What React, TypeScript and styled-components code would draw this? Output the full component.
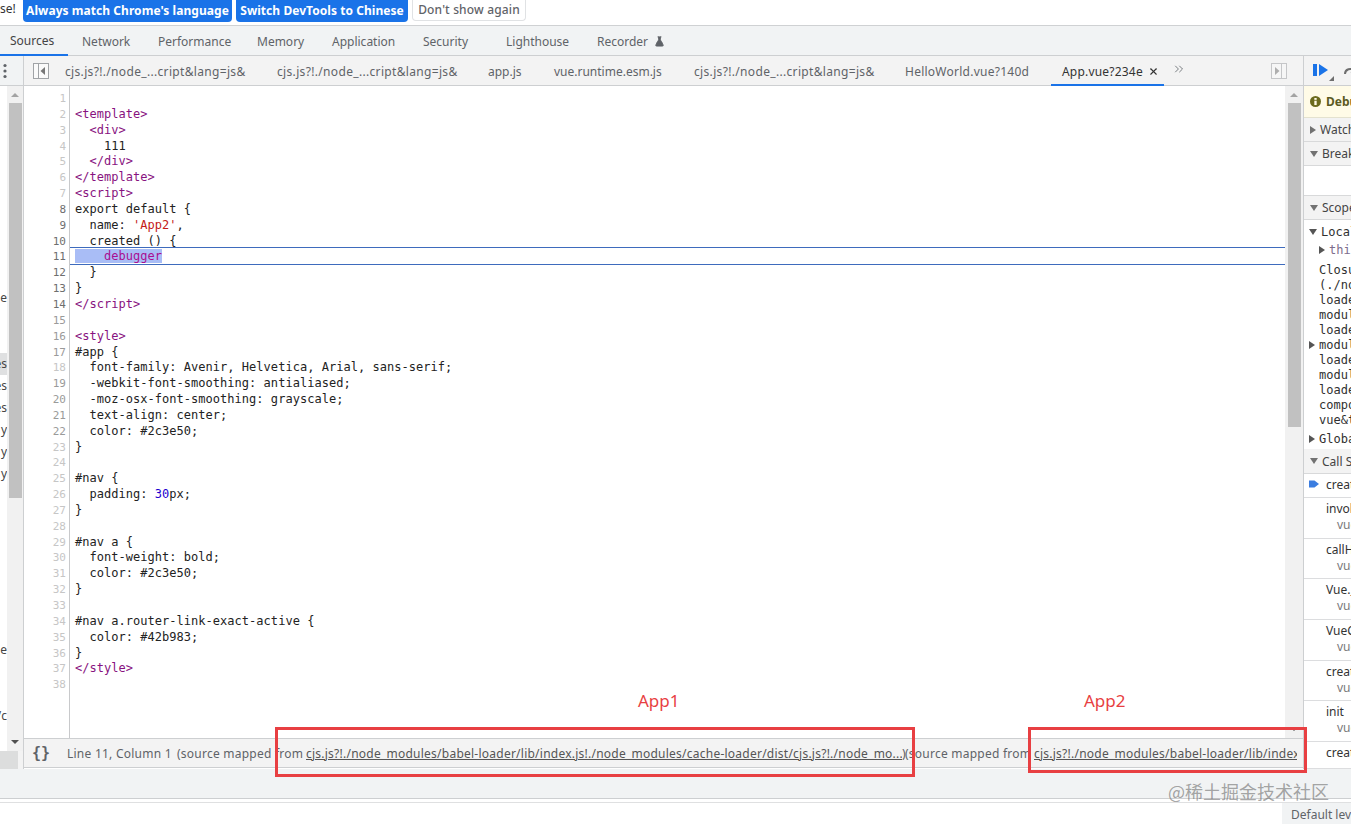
import React from "react";
import styled, { createGlobalStyle } from "styled-components";
import { X, ChevronsRight, FlaskConical } from "lucide-react";

const GlobalStyle = createGlobalStyle`
  html, body { margin: 0; padding: 0; height: 824px; overflow: hidden; background: #fff; }
  * { box-sizing: border-box; }
  svg { flex: none; }
  body { font-family: "Noto Sans", "Open Sans", sans-serif; font-size: 12px; color: #444; }
`;

const Page = styled.div`
  position: relative;
  width: 1351px;
  height: 824px;
  overflow: hidden;
  display: flex;
  flex-direction: column;
`;

/* top info bar */
const InfoBar = styled.div`
  height: 26px;
  display: flex;
  align-items: flex-start;
  border-bottom: 1px solid #cfd1d3;
  background: #fff;
`;
const InfoText = styled.span`
  width: 23px;
  line-height: 18px;
  color: #333;
  font-size: 12px;
`;
const InfoButton = styled.button<{ $plain?: boolean; $w: number }>`
  height: ${(p) => (p.$plain ? "21px" : "22px")};
  padding: 0 0 2px;
  margin-right: 4px;
  border: ${(p) => (p.$plain ? "1px solid #e0e2e4" : "none")};
  border-top: none;
  border-radius: 0 0 4px 4px;
  background: ${(p) => (p.$plain ? "#fff" : "#1a73e8")};
  color: ${(p) => (p.$plain ? "#5f6368" : "#fff")};
  font-family: inherit;
  font-size: 12px;
  font-weight: ${(p) => (p.$plain ? 500 : 700)};
  letter-spacing: ${(p) => (p.$plain ? "0.15px" : "0.05px")};
  line-height: 19px;
  width: ${(p) => p.$w}px;
`;

/* main devtools tabs */
const MainTabs = styled.div`
  height: 30px;
  display: flex;
  background: #f1f3f4;
  border-bottom: 1px solid #cdcfd1;
`;
const MainTab = styled.div<{ $active?: boolean; $w: number }>`
  width: ${(p) => p.$w}px;
  height: 30px;
  margin-right: ${(p) => (p.$active ? "4px" : "0")};
  padding: 0 0 0 10px;
  display: flex;
  align-items: center;
  gap: 6px;
  color: ${(p) => (p.$active ? "#444" : "#5f6368")};
  border-bottom: ${(p) => (p.$active ? "2px solid #1a73e8" : "none")};
  white-space: nowrap;
`;

const Body = styled.div`
  height: 713px;
  display: flex;
`;

/* clipped navigator on the left */
const Navigator = styled.div`
  width: 24px;
  flex: none;
  display: flex;
  flex-direction: column;
  border-right: 1px solid #cdcfd1;
`;
const NavHeader = styled.div`
  height: 30px;
  flex: none;
  display: flex;
  align-items: center;
  padding-left: 3px;
  background: #f1f3f4;
  border-bottom: 1px solid #cdcfd1;
`;
const NavContent = styled.div`
  flex: 1;
  display: flex;
  min-height: 0;
`;
const NavFooter = styled.div`
  height: 18px;
  flex: none;
  background: linear-gradient(to right, #dcdddd 18px, #f3f3f3 18px);
`;
const NavList = styled.div`
  width: 7px;
  flex: none;
  padding-top: 3px;
  overflow: hidden;
`;
const NavRow = styled.div<{ $selected?: boolean }>`
  height: 22px;
  line-height: 22px;
  font-size: 12px;
  display: flex;
  justify-content: flex-end;
  background: ${(p) => (p.$selected ? "#dfe0e1" : "transparent")};
  color: #444;
`;
const Scrollbar = styled.div<{ $w: number }>`
  width: ${(p) => p.$w}px;
  flex: none;
  background: #f1f1f1;
  display: flex;
  flex-direction: column;
  align-items: center;
  height: 100%;
`;
const ArrowUp = styled.div`
  margin-top: 7px;
  width: 0;
  height: 0;
  border-left: 4px solid transparent;
  border-right: 4px solid transparent;
  border-bottom: 4px solid #a3a3a3;
`;
const ArrowDown = styled.div`
  margin-top: auto;
  margin-bottom: 7px;
  width: 0;
  height: 0;
  border-left: 4px solid transparent;
  border-right: 4px solid transparent;
  border-top: 4px solid #505050;
`;
const Thumb = styled.div<{ $h: number; $w: number }>`
  width: ${(p) => p.$w}px;
  height: ${(p) => p.$h}px;
  margin-top: 6px;
  background: #c1c1c1;
`;

/* editor */
const EditorColumn = styled.div`
  width: 1279px;
  flex: none;
  display: flex;
  flex-direction: column;
`;
const FileTabs = styled.div`
  height: 30px;
  flex: none;
  display: flex;
  align-items: stretch;
  padding-left: 9px;
  background: #f3f3f3;
  border-bottom: 1px solid #cdcfd1;
`;
const PanelToggle = styled.div<{ $right?: boolean }>`
  width: 32px;
  display: flex;
  align-items: center;
  margin-left: ${(p) => (p.$right ? "auto" : "0")};
`;
const FileTab = styled.div<{ $active?: boolean; $w: number; $track?: number }>`
  width: ${(p) => p.$w}px;
  height: 30px;
  display: flex;
  align-items: center;
  padding-top: ${(p) => (p.$active ? "2px" : "0")};
  white-space: nowrap;
  letter-spacing: ${(p) => p.$track ?? 0}px;
  color: ${(p) => (p.$active ? "#333" : "#5f6368")};
  border-bottom: ${(p) => (p.$active ? "2px solid #1a73e8" : "none")};
`;
const ActiveTab = styled(FileTab)`
  padding-left: 11px;
  gap: 5px;
  color: #333;
`;
const MoreTabs = styled.div`
  margin-left: 8px;
  display: flex;
  align-items: center;
  padding-bottom: 4px;
  color: #5f6368;
`;
const EditorBody = styled.div`
  height: 652px;
  flex: none;
  display: flex;
`;
const Gutter = styled.div`
  width: 46px;
  flex: none;
  padding: 5px 3px 0 0;
  border-right: 1px solid #c8c9cb;
  text-align: right;
  font-family: "DejaVu Sans Mono", "Liberation Mono", monospace;
  font-size: 11px;
  line-height: 15.85px;
`;
const LineNumber = styled.div<{ $tone: "dark" | "mid" | "light" }>`
  height: 15.85px;
  color: ${(p) => (p.$tone === "dark" ? "#6e6e6e" : p.$tone === "mid" ? "#9a9a9a" : "#c6c6c6")};
`;
const CodeColumn = styled.div`
  flex: 1;
  padding: 5px 0 0 0;
  font-family: "DejaVu Sans Mono", "Liberation Mono", monospace;
  font-size: 12px;
  line-height: 15.85px;
  color: #222;
  min-width: 0;
`;
const CodeLine = styled.div<{ $current?: boolean }>`
  height: 15.85px;
  padding-left: 5px;
  white-space: pre;
  letter-spacing: 0.03px;
  ${(p) =>
    p.$current
      ? "margin: -1px 0 1px; padding-top: 1px; box-shadow: 0 -1px 0 #3e6bbd, 0 1px 0 #3e6bbd;"
      : ""}
`;
const tokenColors = { tag: "#881280", str: "#c41a16", num: "#1c00cf", kw: "#aa0d91", plain: "#222" };
const Token = styled.span<{ $kind: keyof typeof tokenColors; $hit?: boolean }>`
  color: ${(p) => tokenColors[p.$kind]};
  background: ${(p) => (p.$hit ? "#a9bdf6" : "transparent")};
`;

/* status row under the editor */
const StatusBar = styled.div`
  height: 30px;
  flex: none;
  display: flex;
  align-items: center;
  background: #f3f3f3;
  border-top: 1px solid #cdcfd1;
  border-bottom: 1px solid #cdcfd1;
  color: #5f6368;
  letter-spacing: 0.24px;
  white-space: nowrap;
  overflow: hidden;
`;
const Braces = styled.span`
  width: 43px;
  padding-left: 8px;
  font-family: "DejaVu Sans Mono", monospace;
  font-size: 15px;
  font-weight: 700;
  letter-spacing: 0;
  color: #5f6368;
`;
const StatusPosition = styled.span`
  width: 110px;
`;
const SourceLink = styled.span<{ $w: number }>`
  display: inline-block;
  width: ${(p) => p.$w}px;
  overflow: hidden;
  text-decoration: underline;
  color: #555;
  flex: none;
`;
const MappedFrom = styled.span<{ $w: number }>`
  width: ${(p) => p.$w}px;
  flex: none;
`;

/* debugger sidebar, clipped by the window */
const DebugPane = styled.div`
  width: 48px;
  flex: none;
  display: flex;
  flex-direction: column;
  border-left: 1px solid #cdcfd1;
  white-space: nowrap;
  overflow: hidden;
  color: #333;
`;
const DebugToolbar = styled.div`
  height: 30px;
  flex: none;
  display: flex;
  padding: 0 0 0 9px;
  gap: 8px;
  align-items: center;
  background: #f3f3f3;
  border-bottom: 1px solid #cdcfd1;
`;
const Paused = styled.div`
  height: 32px;
  flex: none;
  display: flex;
  align-items: center;
  gap: 5px;
  padding-left: 6px;
  background: #fffbe7;
  border-bottom: 1px solid #e4e2cf;
  color: #5c5a22;
  font-weight: 700;
`;
const SectionHeader = styled.div<{ $h?: number }>`
  height: ${(p) => p.$h ?? 24}px;
  flex: none;
  display: flex;
  align-items: center;
  gap: 4px;
  padding-left: 6px;
  background: #f3f3f3;
  border-bottom: 1px solid #d8d9da;
  color: #444;
`;
const Caret = styled.span<{ $open?: boolean; $dark?: boolean }>`
  width: 0;
  height: 0;
  flex: none;
  ${(p) =>
    p.$open
      ? `border-left: 4px solid transparent; border-right: 4px solid transparent; border-top: 6px solid ${p.$dark ? "#555" : "#727272"};`
      : `border-top: 4px solid transparent; border-bottom: 4px solid transparent; border-left: 6px solid ${p.$dark ? "#555" : "#727272"};`}
`;
const BlankSection = styled.div`
  height: 30px;
  flex: none;
  border-bottom: 1px solid #d8d9da;
`;
const ScopeList = styled.div`
  height: 229px;
  flex: none;
  padding-top: 3px;
  font-family: "DejaVu Sans Mono", monospace;
  font-size: 12px;
  color: #303030;
`;
const ScopeRow = styled.div<{ $indent: number; $h?: number; $muted?: boolean; $after?: number }>`
  height: ${(p) => p.$h ?? 15}px;
  margin-bottom: ${(p) => p.$after ?? 0}px;
  display: flex;
  align-items: center;
  gap: 4px;
  padding-left: ${(p) => p.$indent}px;
  color: ${(p) => (p.$muted ? "#7d6d8c" : "inherit")};
`;
const FrameRow = styled.div<{ $h: number }>`
  height: ${(p) => p.$h}px;
  flex: none;
  padding: 3px 0 0 22px;
  border-bottom: 1px solid #dcdddf;
  line-height: 16px;
  color: #333;
  position: relative;
`;
const FrameSource = styled.div`
  padding-left: 11px;
  color: #7a7a7a;
`;
const CurrentMarker = styled.svg`
  position: absolute;
  left: 5px;
  top: 5px;
`;

/* bottom strips */
const Drawer = styled.div`
  height: 30px;
  flex: none;
  background: #f1f3f4;
  border-bottom: 1px solid #cdcfd1;
`;
const ConsoleBar = styled.div`
  flex: 1;
  margin-top: 3px;
  display: flex;
  justify-content: flex-end;
  border-top: 1px solid #dfe0e1;
`;
const LevelBox = styled.div`
  width: 69px;
  padding: 3px 0 0 9px;
  background: #f1f3f4;
  color: #5f6368;
  white-space: nowrap;
  overflow: hidden;
`;

/* annotations painted on top of the screenshot */
const RedBox = styled.div<{ $l: number; $t: number; $w: number; $h: number }>`
  position: absolute;
  left: ${(p) => p.$l}px;
  top: ${(p) => p.$t}px;
  width: ${(p) => p.$w}px;
  height: ${(p) => p.$h}px;
  border: 3px solid #e83f42;
  pointer-events: none;
`;
const RedLabel = styled.div<{ $l: number; $t: number }>`
  position: absolute;
  left: ${(p) => p.$l}px;
  top: ${(p) => p.$t}px;
  color: #e83f42;
  font-size: 17px;
  line-height: 22px;
`;
const Watermark = styled.div`
  position: absolute;
  left: 1168px;
  top: 778px;
  font-family: "Noto Sans CJK SC", "Noto Sans", sans-serif;
  font-size: 18px;
  line-height: 26px;
  color: rgba(110, 110, 110, 0.62);
  white-space: nowrap;
`;

const mainTabs: [string, number][] = [
  ["Sources", 68],
  ["Network", 76],
  ["Performance", 99],
  ["Memory", 75],
  ["Application", 91],
  ["Security", 83],
  ["Lighthouse", 91],
];
const fileTabs: [string, number, number][] = [
  ["cjs.js?!./node_...cript&lang=js&", 212, 0.33],
  ["cjs.js?!./node_...cript&lang=js&", 211, 0.33],
  ["app.js", 66, 0],
  ["vue.runtime.esm.js", 140, 0],
  ["cjs.js?!./node_...cript&lang=js&", 211, 0.33],
  ["HelloWorld.vue?140d", 146, 0.25],
];

const navRows: Record<number, string> = { 9: "e", 12: "es", 13: "es", 14: "es", 15: "y", 16: "y", 17: "y", 25: "e", 28: "/c" };

type Kind = keyof typeof tokenColors;
type Part = [string, Kind];
const code: Part[][] = [
  [],
  [["<template>", "tag"]],
  [["  <div>", "tag"]],
  [["    111", "plain"]],
  [["  </div>", "tag"]],
  [["</template>", "tag"]],
  [["<script>", "tag"]],
  [["export default {", "plain"]],
  [["  name: ", "plain"], ["'App2'", "str"], [",", "plain"]],
  [["  created () {", "plain"]],
  [["    debugger", "kw"]],
  [["  }", "plain"]],
  [["}", "plain"]],
  [["</script>", "tag"]],
  [],
  [["<style>", "tag"]],
  [["#app {", "plain"]],
  [["  font-family: Avenir, Helvetica, Arial, sans-serif;", "plain"]],
  [["  -webkit-font-smoothing: antialiased;", "plain"]],
  [["  -moz-osx-font-smoothing: grayscale;", "plain"]],
  [["  text-align: center;", "plain"]],
  [["  color: #2c3e50;", "plain"]],
  [["}", "plain"]],
  [],
  [["#nav {", "plain"]],
  [["  padding: ", "plain"], ["30", "num"], ["px;", "plain"]],
  [["}", "plain"]],
  [],
  [["#nav a {", "plain"]],
  [["  font-weight: bold;", "plain"]],
  [["  color: #2c3e50;", "plain"]],
  [["}", "plain"]],
  [],
  [["#nav a.router-link-exact-active {", "plain"]],
  [["  color: #42b983;", "plain"]],
  [["}", "plain"]],
  [["</style>", "tag"]],
  [],
];

const toneOf = (n: number): "dark" | "mid" | "light" => {
  if (n >= 8 && n <= 14) return "dark";
  if ((n >= 15 && n <= 17) || (n >= 19 && n <= 22)) return "mid";
  return "light";
};

const scopeRows = ["Closure", "(./node_modules", "loader", "module", "loader"];
const scopeRows2 = ["loader", "module", "loader", "component", "vue&type"];
const frames: [string, number][] = [
  ["invokeWithErrorHandling", 41],
  ["callHook", 40],
  ["Vue._init", 41],
  ["VueComponent", 41],
  ["createComponentInstance", 40],
  ["init", 41],
];

const PanelIcon = ({ flip }: { flip?: boolean }) => (
  <svg width="16" height="16" viewBox="0 0 16 16" fill="none" style={flip ? { transform: "scaleX(-1)", opacity: 0.55 } : undefined}>
    <rect x="0.5" y="0.5" width="15" height="15" fill="#fafafa" stroke="#a0a3a6" />
    <line x1="5.5" y1="1" x2="5.5" y2="15" stroke="#a0a3a6" />
    <path d="M12 4v8L7.500 8z" fill="#777" />
  </svg>
);

export default function App() {
  return (
    <Page>
      <GlobalStyle />
      <InfoBar>
        <InfoText>se!</InfoText>
        <InfoButton $w={209}>Always match Chrome's language</InfoButton>
        <InfoButton $w={172}>Switch DevTools to Chinese</InfoButton>
        <InfoButton $plain $w={114}>Don't show again</InfoButton>
      </InfoBar>
      <MainTabs>
        {mainTabs.map(([name, w], i) => (
          <MainTab key={name} $w={w} $active={i === 0}>{name}</MainTab>
        ))}
        <MainTab $w={90}>
          Recorder
          <FlaskConical size={11} fill="#5f6368" color="#5f6368" />
        </MainTab>
      </MainTabs>
      <Body>
        <Navigator>
          <NavHeader>
            <svg width="4" height="16" viewBox="0 0 4 16">
              <circle cx="2" cy="2.5" r="1.6" fill="#5f6368" />
              <circle cx="2" cy="8" r="1.6" fill="#5f6368" />
              <circle cx="2" cy="13.5" r="1.6" fill="#5f6368" />
            </svg>
          </NavHeader>
          <NavContent>
            <NavList>
              {Array.from({ length: 30 }, (_, i) => (
                <NavRow key={i} $selected={i === 12}>{navRows[i] ?? ""}</NavRow>
              ))}
            </NavList>
            <Scrollbar $w={16}>
              <ArrowUp />
              <Thumb $w={13} $h={395} />
              <ArrowDown />
            </Scrollbar>
          </NavContent>
          <NavFooter />
        </Navigator>
        <EditorColumn>
          <FileTabs>
            <PanelToggle><PanelIcon /></PanelToggle>
            {fileTabs.map(([name, w, track], i) => (
              <FileTab key={i} $w={w} $track={track}>{name}</FileTab>
            ))}
            <ActiveTab $active $w={113} $track={0.2}>
              App.vue?234e
              <X size={11} strokeWidth={2.4} color="#333" />
            </ActiveTab>
            <MoreTabs><ChevronsRight size={14} strokeWidth={1.4} /></MoreTabs>
            <PanelToggle $right><PanelIcon flip /></PanelToggle>
          </FileTabs>
          <EditorBody>
            <Gutter>
              {code.map((_, i) => (
                <LineNumber key={i} $tone={toneOf(i + 1)}>{i + 1}</LineNumber>
              ))}
            </Gutter>
            <CodeColumn>
              {code.map((parts, i) => (
                <CodeLine key={i} $current={i === 10}>
                  {parts.map(([text, kind], j) => (
                    <Token key={j} $kind={kind} $hit={i === 10}>{text}</Token>
                  ))}
                </CodeLine>
              ))}
            </CodeColumn>
            <Scrollbar $w={18}>
              <ArrowUp />
              <Thumb $w={13} $h={324} />
              <ArrowDown />
            </Scrollbar>
          </EditorBody>
          <StatusBar>
            <Braces>{"{}"}</Braces>
            <StatusPosition>Line 11, Column 1</StatusPosition>
            <MappedFrom $w={129}>(source mapped from</MappedFrom>
            <SourceLink $w={596}>cjs.js?!./node_modules/babel-loader/lib/index.js!./node_modules/cache-loader/dist/cjs.js?!./node_mo...</SourceLink>
            <MappedFrom $w={3}>)</MappedFrom>
            <MappedFrom $w={129}>(source mapped from</MappedFrom>
            <SourceLink $w={263}>cjs.js?!./node_modules/babel-loader/lib/index.js!./node_modules</SourceLink>
          </StatusBar>
        </EditorColumn>
        <DebugPane>
          <DebugToolbar>
            <svg width="22" height="22" viewBox="0 0 22 22">
              <rect x="0" y="4" width="4" height="12" fill="#1a73e8" />
              <path d="M6 4l9 6-9 6z" fill="#1a73e8" />
              <path d="M21 16v5h-5z" fill="#6e6e6e" />
            </svg>
            <svg width="14" height="14" viewBox="0 0 14 14" fill="none">
              <path d="M2 10a5 5 0 0 1 9-3" stroke="#6e6e6e" strokeWidth="2" />
              <path d="M12.500 3v6h-5z" fill="#6e6e6e" />
            </svg>
          </DebugToolbar>
          <Paused>
            <svg width="11" height="11" viewBox="0 0 14 14">
              <circle cx="7" cy="7" r="7" fill="#6b6a1c" />
              <rect x="5.500" y="6" width="3" height="5.500" fill="#fffbe7" />
              <rect x="5.500" y="2.500" width="3" height="2.400" fill="#fffbe7" />
            </svg>
            Debugger paused
          </Paused>
          <SectionHeader><Caret />Watch</SectionHeader>
          <SectionHeader><Caret $open />Breakpoints</SectionHeader>
          <BlankSection />
          <SectionHeader><Caret $open />Scope</SectionHeader>
          <ScopeList>
            <ScopeRow $indent={5} $h={18}><Caret $open $dark />Local</ScopeRow>
            <ScopeRow $indent={15} $h={18} $muted $after={3}><Caret $dark />this: VueComponent</ScopeRow>
            {scopeRows.map((t, i) => (
              <ScopeRow key={i} $indent={15}>{t}</ScopeRow>
            ))}
            <ScopeRow $indent={5}><Caret $dark />module</ScopeRow>
            {scopeRows2.map((t, i) => (
              <ScopeRow key={i} $indent={15}>{t}</ScopeRow>
            ))}
            <ScopeRow $indent={5} $h={24}><Caret $dark />Global</ScopeRow>
          </ScopeList>
          <SectionHeader $h={25}><Caret $open />Call Stack</SectionHeader>
          <FrameRow $h={24}>
            <CurrentMarker width="10" height="10" viewBox="0 0 10 10">
              <path d="M0 1.500h5.500L10 5 5.500 8.500H0z" fill="#3b7de0" />
            </CurrentMarker>
            created
          </FrameRow>
          {frames.map(([name, h]) => (
            <FrameRow key={name} $h={h}>
              {name}
              <FrameSource>vue.runtime.esm.js</FrameSource>
            </FrameRow>
          ))}
          <FrameRow $h={27}>createComponent</FrameRow>
        </DebugPane>
      </Body>
      <Drawer />
      <ConsoleBar><LevelBox>Default levels</LevelBox></ConsoleBar>

      <RedLabel $l={638} $t={690}>App1</RedLabel>
      <RedLabel $l={1084} $t={690}>App2</RedLabel>
      <RedBox $l={275} $t={727} $w={640} $h={50} />
      <RedBox $l={1028} $t={727} $w={279} $h={46} />
      <Watermark>@稀土掘金技术社区</Watermark>
    </Page>
  );
}
